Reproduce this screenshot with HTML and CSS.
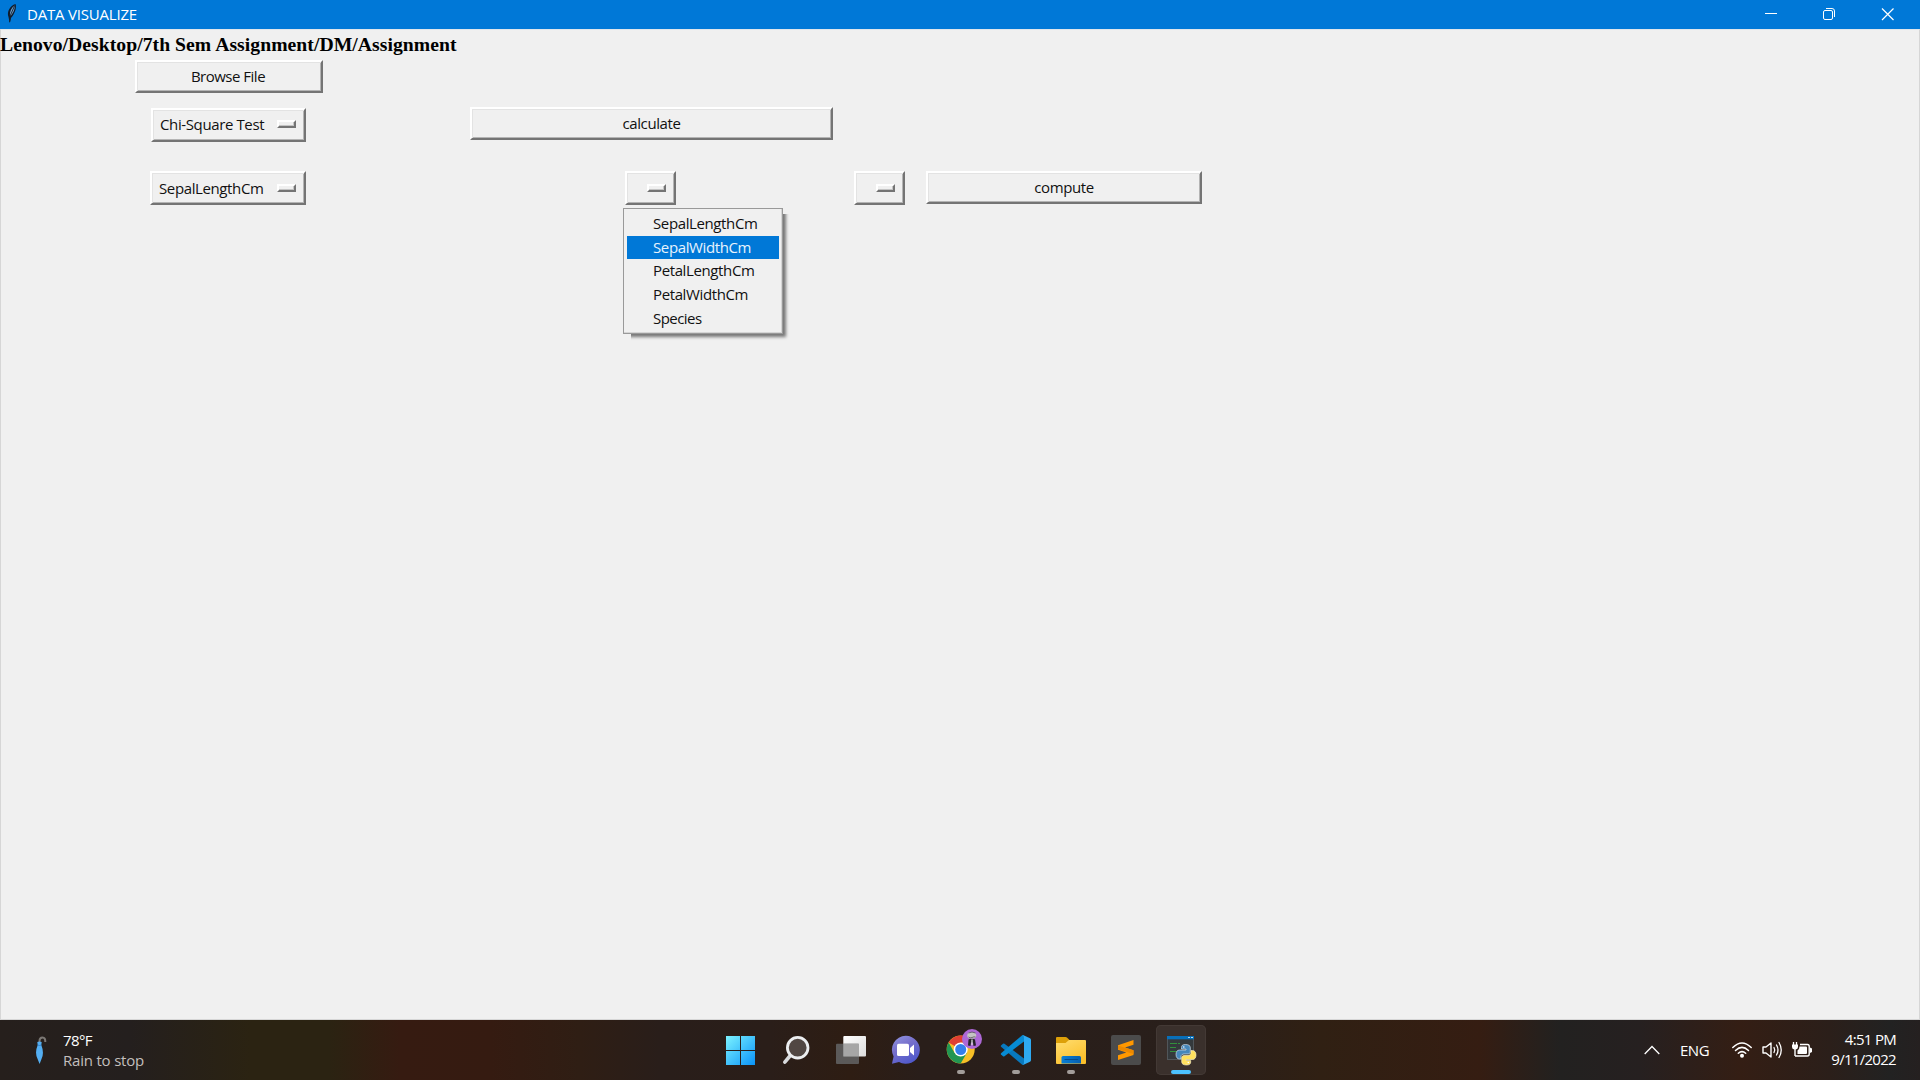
FILE: index.html
```
<!DOCTYPE html>
<html lang="en">
<head>
<meta charset="utf-8">
<title>DATA VISUALIZE</title>
<link rel="stylesheet" href="styles.css">
</head>
<body>
<div class="screen">
  <header class="titlebar">
    <svg class="feather" width="12" height="21" viewBox="0 0 12 21">
      <path d="M3.500 19L2.500 14C.5 9 4 2.500 9.500 1C11 5 8.500 11 5 15L3.800 20Z" fill="#101c2c"/>
      <path d="M4 13C3.500 8 6 4 8.800 2.500C9 6 7 10.500 4.500 13Z" fill="#6f9fcb"/>
      <path d="M3.600 19L4.500 12L8.500 3" stroke="#14202e" stroke-width=".9" fill="none"/>
    </svg>
    <h1 class="title">DATA VISUALIZE</h1>
    <div class="window-controls">
      <svg width="58" height="29" viewBox="0 0 58 29"><path d="M23 13.500H35" stroke="#fff"/></svg>
      <svg width="58" height="29" viewBox="0 0 58 29"><rect x="23.500" y="10.500" width="9" height="9" rx="1.500" fill="none" stroke="#fff"/><path d="M26 8.500H32Q34.500 8.500 34.500 11V17" fill="none" stroke="#fff"/></svg>
      <svg width="58" height="29" viewBox="0 0 58 29"><path d="M24 8.500L35.500 20M35.500 8.500L24 20" stroke="#fff" stroke-width="1.200"/></svg>
    </div>
  </header>

  <main class="client">
    <div class="path">Lenovo/Desktop/7th Sem Assignment/DM/Assignment</div>
    <button class="button browse">Browse File</button>
    <button class="option test">Chi-Square Test<span class="knob"></span></button>
    <button class="button calculate">calculate</button>
    <button class="option first">SepalLengthCm<span class="knob"></span></button>
    <div class="dropdown">
      <button class="option blank"><span class="knob"></span></button>
      <ul class="menu">
        <li>SepalLengthCm</li>
        <li class="active">SepalWidthCm</li>
        <li>PetalLengthCm</li>
        <li>PetalWidthCm</li>
        <li class="tight">Species</li>
      </ul>
    </div>
    <button class="option blank third"><span class="knob"></span></button>
    <button class="button compute">compute</button>
  </main>

  <footer class="taskbar">
    <div class="weather">
      <svg width="12" height="29" viewBox="0 0 12 29">
        <path d="M4.500 7V5Q4.500 1.500 7.500 1.500T10.300 6" fill="none" stroke="#7b7774" stroke-width="2"/>
        <path d="M2.300 6Q4.500 4.800 6.700 6L6.300 9Q9.500 17 6.500 23L4.600 28L2.600 23Q-.6 17 2.700 9Z" fill="#54aef2"/>
        <path d="M2.700 9Q4.500 10 6.300 9" fill="none" stroke="#287ac8" stroke-width=".8"/>
      </svg>
      <div class="weather-text"><span class="temp">78°F</span><span class="forecast">Rain to stop</span></div>
    </div>

    <nav class="apps">
      <div class="app">
        <svg viewBox="0 0 50 50"><defs><linearGradient id="win" x1="10" y1="11" x2="39" y2="40" gradientUnits="userSpaceOnUse"><stop stop-color="#7cf3ff"/><stop offset="1" stop-color="#0a93f8"/></linearGradient></defs><path d="M10 11h14v14H10zM25 11h14v14H25zM10 26h14v14H10zM25 26h14v14H25z" fill="url(#win)"/></svg>
      </div>
      <div class="app">
        <svg viewBox="0 0 50 50"><path d="M18.500 31.500L13.800 37.200" stroke="#d9dbdd" stroke-width="3.600" stroke-linecap="round"/><circle cx="26.700" cy="22.700" r="10.300" fill="#514743" stroke="#eceef0" stroke-width="2.800"/></svg>
      </div>
      <div class="app">
        <svg viewBox="0 0 50 50"><defs><linearGradient id="pane" x2="1" y2="1"><stop stop-color="#fff"/><stop offset="1" stop-color="#dcdcdc"/></linearGradient></defs><rect x="17.300" y="11" width="22.700" height="20.500" rx="1" fill="url(#pane)"/><rect x="10" y="18.700" width="23" height="20.300" rx="1" fill="#606060" fill-opacity=".9"/><path d="M17.300 18.700H33V31.500H17.300Z" fill="#a6a6a6"/></svg>
      </div>
      <div class="app">
        <svg viewBox="0 0 50 50"><defs><linearGradient id="chat" x1="0" y1="0" x2=".6" y2="1"><stop stop-color="#9399e3"/><stop offset=".45" stop-color="#7770cc"/><stop offset="1" stop-color="#5059cb"/></linearGradient></defs><path d="M24.700 10.800A14 14 0 1 1 18 37L11 38.800Q11.500 36 12.600 31.500A14 14 0 0 1 24.700 10.800Z" fill="url(#chat)"/><rect x="16" y="18.700" width="12" height="12.300" rx="1.600" fill="#fff"/><path d="M29 23L33 19.500V30.500L29 27Z" fill="#fff"/></svg>
      </div>
      <div class="app running">
        <svg viewBox="0 0 50 50">
          <circle cx="24.700" cy="24.500" r="14" fill="#f6bf26"/>
          <path d="M24.700 24.500L12.600 17.500A14 14 0 0 1 36.800 17.500H24.700Z" fill="#df3f33"/>
          <path d="M12.600 17.500A14 14 0 0 0 24.700 38.500L30.800 28L24.700 24.500L18.600 28Z" fill="#219653"/>
          <circle cx="24.700" cy="24.500" r="7" fill="#fff"/><circle cx="24.700" cy="24.500" r="5.500" fill="#347fec"/>
          <circle cx="36" cy="14" r="10" fill="#ad68d6"/>
          <path d="M32 20.500L32.500 14.500Q36 12.500 39 14.500L40 20.500L37.500 21L37 17.500H35L34.500 21Z" fill="#252329"/><ellipse cx="35.700" cy="10.500" rx="4.500" ry="3.300" fill="#c4c4c4"/><path d="M32.500 12Q34 13.500 36 12.500T39.500 12M32.500 8Q36 6 39.500 8" stroke="#555" stroke-width=".8" fill="none"/><path d="M36 14.500V20" stroke="#ddd" stroke-width="1.300"/>
        </svg>
      </div>
      <div class="app running">
        <svg viewBox="0 0 50 50"><path d="M10 20.500L12 18.700Q12.700 18.200 13.500 18.800L33 33.500V39.500L31.500 40L10.300 22Q9.400 21.200 10 20.500Z" fill="#0879bf"/><path d="M10 29.500L12 31.300Q12.700 31.800 13.500 31.200L33 16.500V10.500L31.500 10L10.300 28Q9.400 28.800 10 29.500Z" fill="#078bd3"/><path d="M32 10L39 13.200Q40 13.700 40 15V35Q40 36.300 39 36.800L32 40Q33 39 33 37V13Q33 11 32 10Z" fill="#2eaaf2"/></svg>
      </div>
      <div class="app running">
        <svg viewBox="0 0 50 50"><defs><linearGradient id="folder" x2=".6" y2="1"><stop stop-color="#ffdd70"/><stop offset="1" stop-color="#fbc02b"/></linearGradient><linearGradient id="clip" x2="1"><stop stop-color="#087fd6"/><stop offset="1" stop-color="#065faf"/></linearGradient></defs><path d="M10 13Q10 12 11 12H19.500Q20.500 12 21.200 12.700L23.500 15V20H10Z" fill="#dda009"/><path d="M10 18H19.500L23 15H39Q40 15 40 16V38Q40 39 39 39H11Q10 39 10 38Z" fill="url(#folder)"/><path d="M15.500 38.500V32.500Q15.500 31 17 31H33.500Q35 31 35 32.500V38.500Z" fill="url(#clip)"/><path d="M19 34.500H31.500" stroke="#064b8c" stroke-width="1.200" stroke-linecap="round"/></svg>
      </div>
      <div class="app">
        <svg viewBox="0 0 50 50"><rect x="10" y="10" width="30" height="30" rx="2" fill="#4b4b4b"/><path d="M17 20.300L32.500 15V19.800L24 22.600L32.500 25.300V30L17 35V30.200L25.300 27.500L17 24.800Z" fill="#ff9800"/><path d="M17 20.500L32.500 25.300V29L17 24.300Z" fill="#ec8900"/></svg>
      </div>
      <div class="app running focused">
        <svg viewBox="0 0 50 50">
          <rect x="11.500" y="11.500" width="26" height="23" fill="#34393c" stroke="#51565a"/><path d="M11 11H38V14.300H11Z" fill="#086fb9"/><path d="M32 12.500H34M35 12.500H37" stroke="#bbdcf0"/><path d="M14 18.500H21M22 18.500H24M14 22.500H20M14 26.500H24" stroke="#32903c" stroke-width="1.200"/>
          <path d="M29.500 19.500C26.500 19.500 25.500 20.500 25.500 22.500V24H30V25H23.500C21 25 20 27 20 29.500C20 32.500 21.500 34 23.500 34H25V31.500C25 30 26.500 29 28 29H32C33.500 29 34.300 28 34.300 26.500V22.500C34.300 20.500 32.500 19.500 29.500 19.500Z" fill="#4687bb" stroke="#e9f0f5" stroke-width=".6"/>
          <path d="M30.500 40C33.500 40 34.700 39 34.700 37V35.500H30V34.500H36.500C39 34.500 40 32.500 40 30C40 27 38.500 25.500 36.500 25.500H35V27.500C35 29.500 33.500 30.500 32 30.500H28C26.500 30.500 25.700 31.500 25.700 33V37C25.700 39 27.500 40 30.500 40Z" fill="#ffe05d" stroke="#fff6d1" stroke-width=".6"/>
          <circle cx="27.800" cy="22" r=".8" fill="#fff"/><circle cx="32.300" cy="37.500" r=".8" fill="#fff"/>
        </svg>
      </div>
    </nav>

    <div class="tray">
      <svg class="chevron" width="16" height="10" viewBox="0 0 16 10"><path d="M.7 9L8 1.500L15.300 9" fill="none" stroke="#fff" stroke-width="1.300"/></svg>
      <span class="lang">ENG</span>
      <div class="status">
        <svg width="20" height="18" viewBox="0 0 20 18"><g fill="none" stroke="#fff" stroke-width="1.500" stroke-linecap="round"><path d="M.8 6.500Q10-2.500 19.200 6.500"/><path d="M3.500 9.500Q10 3.200 16.500 9.500"/><path d="M6.300 12.300Q10 9 13.700 12.300"/></g><circle cx="10" cy="14.700" r="2" fill="#fff"/></svg>
        <svg width="20" height="18" viewBox="0 0 20 18"><path d="M1 6H4L9 2V16L4 12H1Z" fill="none" stroke="#fff" stroke-width="1.400" stroke-linejoin="round"/><g fill="none" stroke="#fff" stroke-width="1.300" stroke-linecap="round"><path d="M12 6.500Q13.500 9 12 11.500"/><path d="M14.500 4Q17.500 9 14.500 14"/><path d="M17 1.500Q21.500 9 17 16.500"/></g></svg>
        <svg width="20" height="18" viewBox="0 0 20 18"><path d="M1.500 1V4M4.500 1V4" stroke="#fff" stroke-width="1.300"/><path d="M0 3.500H6V6Q6 8 3.700 8.500V15H2.300V8.500Q0 8 0 6Z" fill="#fff"/><path d="M8 3.500H15.500Q17.200 3.500 17.200 5.500V13Q17.200 15 15.500 15H3" fill="none" stroke="#fff" stroke-width="1.400"/><path d="M7.500 5.500H14Q15 5.500 15 6.500V12Q15 13 14 13H5.500V9.500Q7.500 8.500 7.500 5.500ZM18 6.500L20 7.500V11L18 12Z" fill="#fff"/></svg>
      </div>
      <div class="clock"><span>4:51 PM</span><span>9/11/2022</span></div>
    </div>
  </footer>
</div>
</body>
</html>
```
FILE: styles.css
```
* { box-sizing: border-box; }
body { margin: 0; }

.screen {
  width: 1920px;
  height: 1080px;
  display: flex;
  flex-direction: column;
  overflow: hidden;
  background: #f0f0f0;
  font: 15px/20px "Open Sans", "Noto Sans", sans-serif;
  letter-spacing: -0.38px;
  color: #111;
}

/* Title bar */
.titlebar {
  flex: none;
  height: 29px;
  display: flex;
  align-items: center;
  padding-left: 6px;
  background: #0078d7;
  color: #fff;
}
.feather { margin-bottom: 2px; }
.title {
  margin: 0 auto 2px 9px;
  font-size: 15px;
  font-weight: 400;
  letter-spacing: -0.2px;
}
.window-controls { display: flex; margin-right: 4px; }

/* Client area */
.client {
  flex: 1;
  display: grid;
  grid-template-columns: 455px 389px 69px 300px;
  grid-template-rows: 30px 33px 63px 64px;
  align-items: center;
  justify-items: center;
  border: 1px solid #d6d6d6;
  border-top-color: #dfe6ec;
}
.path {
  grid-column: 1 / -1;
  justify-self: start;
  margin: 0 0 2px -1px;
  font: bold 19.68px/24px "Liberation Serif", serif;
  letter-spacing: 0.04px;
  white-space: nowrap;
  color: #000;
}
.button, .option {
  margin: 0;
  padding: 0;
  border: 2px solid;
  border-color: #fff #747474 #747474 #fff;
  background: #f0f0f0;
  box-shadow: inset 1px 1px #e3e3e3, inset -1px -1px #b4b4b4;
  color: inherit;
  font: inherit;
  letter-spacing: inherit;
}
.button { height: 33px; padding-bottom: 2px; }
.browse { grid-area: 2 / 1; width: 188px; padding-right: 1px; letter-spacing: -0.5px; }
.calculate { grid-area: 3 / 2; width: 363px; margin: 0 0 2px 2px; }
.compute { grid-area: 4 / 4; width: 276px; margin-bottom: 1px; }
.option {
  height: 34px;
  display: flex;
  align-items: center;
  justify-content: space-between;
  padding: 0 8px 1px 7px;
}
.test { grid-area: 3 / 1; width: 155px; }
.first { grid-area: 4 / 1; width: 156px; margin-right: 1px; }
.third { grid-area: 4 / 3; }
.blank { width: 51px; justify-content: flex-end; }
.knob {
  width: 19px;
  height: 8px;
  border: 2px solid;
  border-color: #fff #747474 #747474 #fff;
  box-shadow: inset -1px -1px #c4c4c4;
}

/* Open option list */
.dropdown { grid-area: 4 / 2; position: relative; }
.menu {
  position: absolute;
  left: -2px;
  top: 37px;
  width: 160px;
  height: 126px;
  margin: 0;
  padding: 3px;
  list-style: none;
  border: 1px solid #999;
  background: #f0f0f0;
  box-shadow: inset -1px -1px #d5d5d5, 3px 3px 3px rgba(0, 0, 0, .5);
  clip-path: polygon(0 0, 100% 0, 100% 6px, 110% 6px, 110% 110%, 8px 110%, 8px 100%, 0 100%);
}
.menu li {
  height: 23.7px;
  padding-left: 26px;
  line-height: 23.7px;
}
.menu .active { background: #0078d7; color: #e8f3fd; }
.menu .tight { letter-spacing: -0.55px; }

/* Taskbar */
.taskbar {
  flex: none;
  height: 60px;
  display: grid;
  grid-template-columns: 716px 490px 1fr;
  align-items: center;
  color: #fff;
  background: linear-gradient(90deg, #261f1c 0, #241f1e 130px, #2b2312 250px, #2b2312 330px, #361b11 400px, #351b11 490px, #2f1e14 580px, #291e1a 660px, #2a1e19 770px, #2e1d13 850px, #291e1a 920px, #291f1b 1200px, #302013 1320px, #351d12 1480px, #222120 1560px, #262020 1640px, #341e14 1740px, #2b1f1a 1830px, #222222 1890px, #252020 1920px);
}
.weather { display: flex; align-items: center; gap: 16px; padding-left: 35px; }
.weather-text, .clock { display: flex; flex-direction: column; }
.temp { letter-spacing: -0.6px; }
.forecast { letter-spacing: -0.2px; color: #c3bfbd; }
.apps { display: flex; gap: 5px; }
.app {
  width: 50px;
  height: 50px;
  display: grid;
  grid-template: 50px / 50px;
  justify-items: center;
}
.app svg { grid-area: 1 / 1; width: 50px; height: 50px; }
.running::after {
  content: "";
  grid-area: 1 / 1;
  align-self: end;
  width: 8px;
  height: 4px;
  margin-bottom: 1px;
  border-radius: 2px;
  background: #a29d9a;
}
.focused {
  border-radius: 5px;
  background: #3a302c;
  box-shadow: inset 0 0 0 1px #433935;
}
.focused::after { width: 20px; background: #4cc2ff; }
.tray { display: flex; align-items: center; padding-right: 24px; }
.chevron { margin-left: 438px; }
.lang { margin-left: 20px; letter-spacing: -0.5px; }
.status { display: flex; gap: 10px; margin: 0 auto 0 23px; }
.clock { align-items: flex-end; margin-bottom: 2px; letter-spacing: -0.7px; }
```
